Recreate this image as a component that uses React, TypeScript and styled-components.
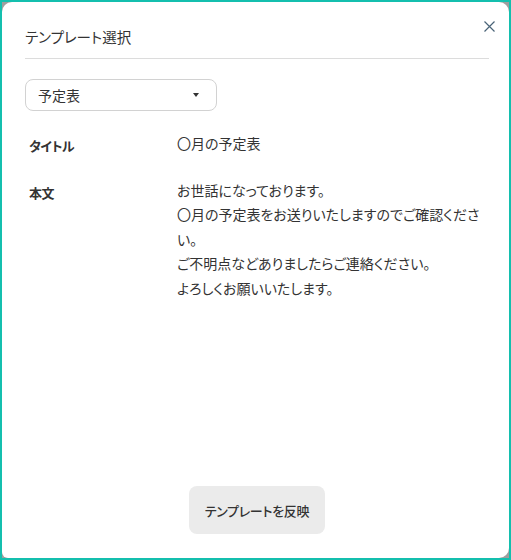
import React from "react";
import styled, { createGlobalStyle } from "styled-components";

const GlobalStyle = createGlobalStyle`
    html, body {
        margin: 0;
        padding: 0;
    }
    body {
        font-family: "Noto Sans CJK JP", "Noto Sans", sans-serif;
        font-feature-settings: "palt";
        color: #333;
    }
`;

const Frame = styled.div`
    box-sizing: border-box;
    width: 511px;
    height: 560px;
    border: 2px solid #14bfae;
    background: #9e9e9e;
    display: flex;
`;

const Dialog = styled.div`
    position: relative;
    flex: 1;
    background: #fff;
    border-radius: 10px 10px 10px 6px;
    display: flex;
    flex-direction: column;
    padding: 0 18px 0 23px;
`;

const Header = styled.div`
    display: flex;
    align-items: center;
    height: 56px;
    margin-right: 2px;
    border-bottom: 1px solid #dcdcdc;
`;

const Title = styled.h2`
    margin: 0;
    padding-top: 13px;
    font-size: 14.5px;
    font-weight: 400;
    color: #333;
`;

const CloseButton = styled.button`
    position: absolute;
    top: 15px;
    right: 11px;
    width: 18px;
    height: 18px;
    padding: 0;
    border: none;
    background: none;
    display: flex;
    align-items: center;
    justify-content: center;
    cursor: pointer;
`;

const Select = styled.div`
    box-sizing: border-box;
    margin-top: 20px;
    width: 192px;
    height: 32px;
    border: 1px solid #d2d2d2;
    border-radius: 8px;
    display: flex;
    align-items: center;
    justify-content: space-between;
    padding: 0 17px 0 12px;
    font-size: 14px;
    color: #333;
`;

const Caret = styled.span`
    width: 0;
    height: 0;
    border-left: 3.5px solid transparent;
    border-right: 3.5px solid transparent;
    border-top: 4px solid #333;
`;

const Fields = styled.div`
    display: grid;
    grid-template-columns: 152px 1fr;
    row-gap: 22px;
    margin-top: 20px;
`;

const Label = styled.div`
    padding-left: 4px;
    padding-top: 5px;
    font-size: 13px;
    font-weight: 700;
    letter-spacing: -0.5px;
    color: #333;
`;

const Value = styled.div`
    font-size: 14px;
    line-height: 24.5px;
    color: #333;
    white-space: pre-line;
`;

const Footer = styled.div`
    margin-top: auto;
    display: flex;
    justify-content: center;
    padding: 0 2px 24px 0;
`;

const ApplyButton = styled.button`
    width: 136px;
    height: 48px;
    border: none;
    border-radius: 8px;
    background: #ebebeb;
    font-family: "Noto Sans CJK JP", sans-serif;
    font-feature-settings: "palt";
    font-size: 13px;
    font-weight: 500;
    letter-spacing: -0.3px;
    color: #333;
    cursor: pointer;
`;

const body = `お世話になっております。
〇月の予定表をお送りいたしますのでご確認ください。
ご不明点などありましたらご連絡ください。
よろしくお願いいたします。`;

const App = () => {
    return (
        <>
            <GlobalStyle />
            <Frame>
                <Dialog>
                    <CloseButton aria-label="close">
                        <svg width="11" height="11" viewBox="0 0 11 11">
                            <path d="M0.5 0.5 L10.5 10.5 M10.5 0.5 L0.5 10.5" stroke="#4a6478" strokeWidth="1.2" />
                        </svg>
                    </CloseButton>
                    <Header>
                        <Title>テンプレート選択</Title>
                    </Header>
                    <Select>
                        <span>予定表</span>
                        <Caret />
                    </Select>
                    <Fields>
                        <Label>タイトル</Label>
                        <Value>〇月の予定表</Value>
                        <Label>本文</Label>
                        <Value>{body}</Value>
                    </Fields>
                    <Footer>
                        <ApplyButton>テンプレートを反映</ApplyButton>
                    </Footer>
                </Dialog>
            </Frame>
        </>
    );
};

export default App;
